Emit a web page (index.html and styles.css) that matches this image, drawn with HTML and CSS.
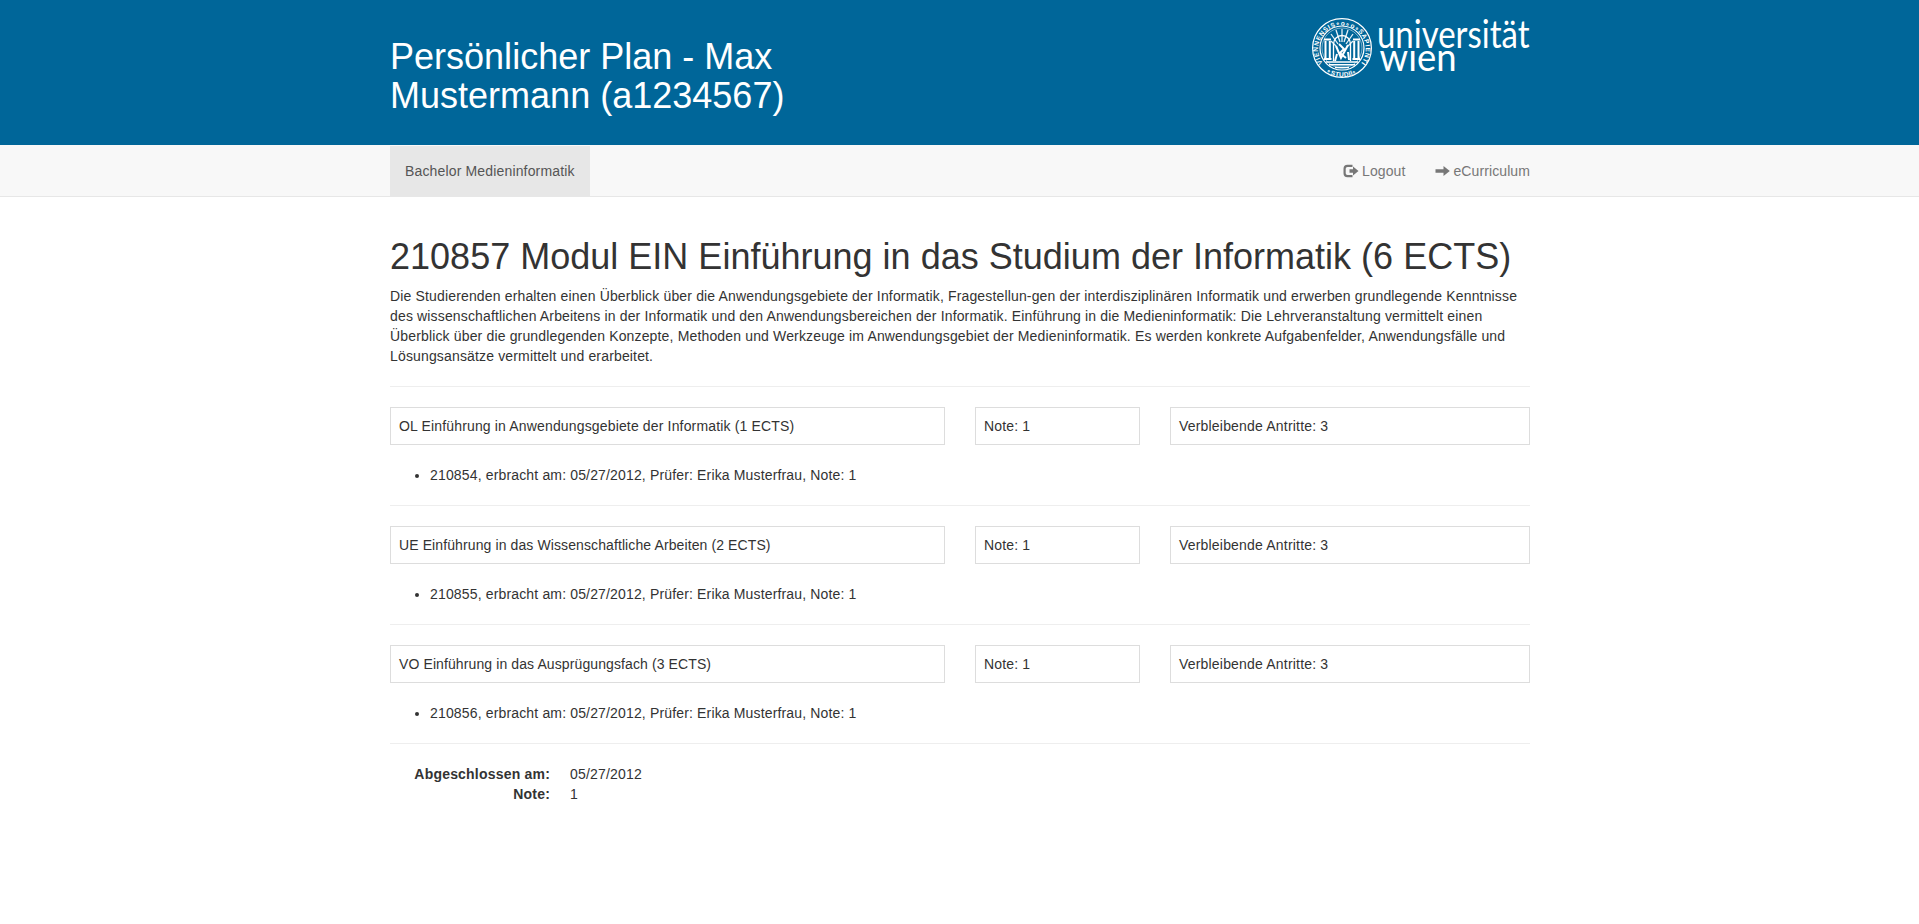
FILE: index.html
```html
<!DOCTYPE html>
<html lang="de">
<head>
<meta charset="utf-8">
<title>Persönlicher Plan</title>
<link rel="stylesheet" href="styles.css">
</head>
<body>
<header class="page-head">
  <div class="container head-row">
    <h1 class="head-title">Persönlicher Plan - Max Mustermann (a1234567)</h1>
    <svg class="logo" width="220" height="64" viewBox="0 0 220 64" role="img" aria-label="universität wien">
      <defs>
        <path id="ringTop" d="M12.800 47.200A23.700 23.700 0 1 1 51.200 47.200"/>
        <path id="ringBottom" d="M14 54.500A28.500 28.500 0 0 0 50 54.500"/>
      </defs>
      <g fill="none" stroke="#fff">
        <circle cx="32" cy="32" r="29.400" stroke-width="1.200"/>
        <circle cx="32" cy="32" r="22" stroke-width="1.200"/>
        <circle cx="32" cy="32" r="20" stroke-width=".8" opacity=".6"/>
        <path d="M14 23.500h7M14 43h7.500M43 23.500h7M42.500 43h7.500" stroke-width="2.200"/>
        <path d="M15.500 25v17M19.800 25v17M44.200 25v17M48.500 25v17" stroke-width="2"/>
        <path d="M23.500 45V28a8.500 8.500 0 0 1 17 0v17" stroke-width="1.300"/>
        <path d="M32 26V13M30 26l-4-12M34 26l4-12M28 28l-7-10M36 28l7-10M26 30l-5-5M38 30l5-5" stroke-width="1.300" opacity=".9"/>
        <path d="M26 30l5 12 7-13M29 28l5 5-4 4 6 5M27 38l-2 7M38 36l1 8" stroke-width="2"/>
        <path d="M16 46h32M19 48.800h26M25 51.500h14" stroke-width="1.400"/>
      </g>
      <g class="seal-text">
        <text><textPath href="#ringTop" textLength="114">VIENNENSIS∘o∘o∘SAPIENTIAE</textPath></text>
        <text><textPath href="#ringBottom" startOffset="3" textLength="32">∘STUDII∘</textPath></text>
      </g>
      <text class="wordmark" x="67" y="31.700" textLength="152.500" lengthAdjust="spacingAndGlyphs">universität</text>
      <text class="wordmark" x="69.500" y="54.500" textLength="77" lengthAdjust="spacingAndGlyphs">wıen</text>
    </svg>
  </div>
</header>
<nav class="navbar">
  <div class="container nav-row">
    <a class="nav-link active">Bachelor Medieninformatik</a>
    <div class="nav-right">
      <a class="nav-link with-icon"><svg class="icon" width="16" height="14" viewBox="0 0 16 14"><path fill="none" stroke="currentColor" stroke-width="2.200" d="M9.500 1.900H4.500Q1.600 1.900 1.600 4.700V9.300Q1.600 12.100 4.500 12.100H9.500"/><path fill="currentColor" d="M6.500 5.200H10V2.500L15.500 7 10 11.500V8.800H6.500z"/></svg>Logout</a>
      <a class="nav-link with-icon"><svg class="icon" width="15" height="14" viewBox="0 0 15 14"><path fill="currentColor" d="M.5 5.200H8.500V2L14.800 7 8.500 12V8.800H.5z"/></svg>eCurriculum</a>
    </div>
  </div>
</nav>
<main class="container content">
  <h1 class="title">210857 Modul EIN Einführung in das Studium der Informatik (6 ECTS)</h1>
  <p class="intro">Die Studierenden erhalten einen Überblick über die Anwendungsgebiete der Informatik, Fragestellun-gen der interdisziplinären Informatik und erwerben grundlegende Kenntnisse des wissenschaftlichen Arbeitens in der Informatik und den Anwendungsbereichen der Informatik. Einführung in die Medieninformatik: Die Lehrveranstaltung vermittelt einen Überblick über die grundlegenden Konzepte, Methoden und Werkzeuge im Anwendungsgebiet der Medieninformatik. Es werden konkrete Aufgabenfelder, Anwendungsfälle und Lösungsansätze vermittelt und erarbeitet.</p>
  <hr>
  <div class="course"><div class="cell">OL Einführung in Anwendungsgebiete der Informatik (1 ECTS)</div><div class="cell">Note: 1</div><div class="cell attempts">Verbleibende Antritte: 3</div></div>
  <ul class="exams"><li>210854, erbracht am: 05/27/2012, Prüfer: Erika Musterfrau, Note: 1</li></ul>
  <hr>
  <div class="course"><div class="cell tight">UE Einführung in das Wissenschaftliche Arbeiten (2 ECTS)</div><div class="cell">Note: 1</div><div class="cell attempts">Verbleibende Antritte: 3</div></div>
  <ul class="exams"><li>210855, erbracht am: 05/27/2012, Prüfer: Erika Musterfrau, Note: 1</li></ul>
  <hr>
  <div class="course"><div class="cell tight">VO Einführung in das Ausprügungsfach (3 ECTS)</div><div class="cell">Note: 1</div><div class="cell attempts">Verbleibende Antritte: 3</div></div>
  <ul class="exams"><li>210856, erbracht am: 05/27/2012, Prüfer: Erika Musterfrau, Note: 1</li></ul>
  <hr>
  <dl class="summary"><dt>Abgeschlossen am:</dt><dd>05/27/2012</dd><dt>Note:</dt><dd>1</dd></dl>
</main>
</body>
</html>
```
FILE: styles.css
```css
* { box-sizing: border-box; }
body {
  margin: 0;
  font: 14px/20px "Liberation Sans", Arial, sans-serif;
  letter-spacing: .155px;
  color: #333;
  background: #fff;
}
.container { width: 1170px; margin: 0 auto; padding: 0 14.5px 0 15.5px; }
.page-head { height: 145px; background: #006699; color: #fff; }
.head-row { display: flex; justify-content: space-between; align-items: flex-start; }
.head-title, .title { font-size: 36px; font-weight: 500; line-height: 39.6px; letter-spacing: .01px; }
.head-title { width: 555px; padding-right: 120px; margin: 37px 0 0; line-height: 39px; }
.logo { display: block; margin-top: 16px; letter-spacing: 0; overflow: visible; }
.wordmark { font-family: Lato, "Open Sans", sans-serif; font-size: 38px; fill: #fff; }
.seal-text { font: 700 6.5px "Liberation Sans", sans-serif; fill: #fff; }
.navbar {
  height: 52px;
  background: #f8f8f8;
  border-top: 1px solid #f8f8f8;
  border-bottom: 1px solid #e7e7e7;
}
.nav-row, .nav-right { display: flex; justify-content: space-between; }
.nav-link { padding: 15px; color: #777; white-space: nowrap; }
.nav-link.active { color: #555; background: #e7e7e7; }
.with-icon { display: flex; align-items: center; gap: 3px; letter-spacing: .1px; }
.nav-right { margin-right: -15px; }
.icon { display: block; }
.content { padding-top: 39.6px; }
.title { margin: 0 0 10px; }
.intro { margin: 0; }
hr { margin: 20px 0; border: 0; border-top: 1px solid #eee; }
.course { display: grid; grid-template-columns: 555px 165px 360px; gap: 30px; }
.cell { border: 1px solid #ddd; padding: 8px; }
.cell.tight { letter-spacing: .105px; }
.cell.attempts { letter-spacing: .19px; }
.exams { margin: 20px 0; padding-left: 40px; }
.summary { display: grid; grid-template-columns: 160px 1fr; column-gap: 20px; margin: 0; letter-spacing: .2px; }
.summary dt { font-weight: 700; text-align: right; }
.summary dd { margin: 0; }
```
